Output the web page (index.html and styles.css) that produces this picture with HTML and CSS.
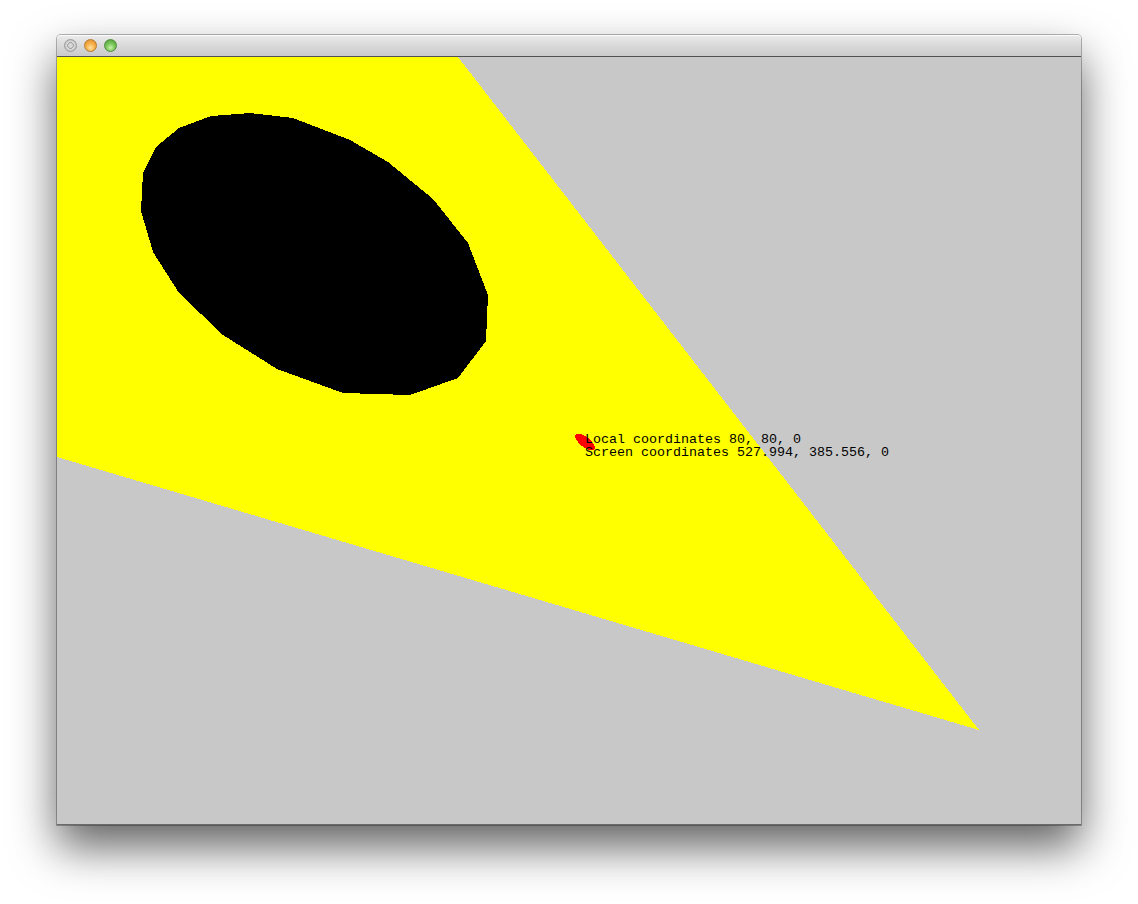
FILE: index.html
```html
<!DOCTYPE html>
<html>
<head>
<meta charset="utf-8">
<title>Coordinates</title>
<link rel="stylesheet" href="styles.css">
</head>
<body>
<div class="window">
  <div class="titlebar">
    <span class="light light-close"></span>
    <span class="light light-min"></span>
    <span class="light light-max"></span>
  </div>
  <div class="content">
    <svg class="canvas" width="1024" height="768" viewBox="0 0 1024 768">
      <polygon class="yellow" points="0,0 401,0 922,673 0,400"/>
      <polygon class="black" points="193,56 236,61 293,83 331,105 376,142 411,186 431,238 429,284 401,321 353,338 286,336 220,312 166,278 122,236 96,195 84,154 86,116 99,90 122,71 154,59"/>
      <ellipse class="red" cx="528" cy="385" rx="12" ry="5" transform="rotate(38 528 385)"/>
      <text class="label" x="528" y="386">Local coordinates 80, 80, 0</text>
      <text class="label" x="528" y="399">Screen coordinates 527.994, 385.556, 0</text>
    </svg>
  </div>
</div>
</body>
</html>
```

FILE: styles.css
```css
html, body {
  margin: 0;
  padding: 0;
  background: #ffffff;
}
body {
  padding: 35px 57px 79px 57px;
  width: 1024px;
}
.window {
  width: 1024px;
  border-radius: 4px 4px 0 0;
  box-shadow: 0 0 0 1px rgba(0,0,0,0.28), 0 22px 45px rgba(0,0,0,0.62);
  background: #c8c8c8;
}
.titlebar {
  height: 21px;
  border-bottom: 1px solid #525252;
  border-radius: 4px 4px 0 0;
  background: linear-gradient(#ececec, #d9d9d9 50%, #cbcbcb);
  box-shadow: inset 0 1px 0 rgba(255,255,255,0.8);
  display: flex;
  align-items: center;
  padding-left: 7px;
  gap: 7px;
}
.light {
  width: 13px;
  height: 13px;
  border-radius: 50%;
  box-sizing: border-box;
  display: block;
}
.light-close {
  background: radial-gradient(circle at 50% 50%, #d8d8d8 0 2px, #a8a8a8 2.5px 3.2px, #dcdcdc 3.6px, #bdbdbd 6px);
  border: 1px solid #9a9a9a;
}
.light-min {
  background: radial-gradient(circle at 50% 70%, #ffe2a0 0, #f7b04a 45%, #d98a28 100%);
  border: 1px solid #b67a2c;
}
.light-max {
  background: radial-gradient(circle at 50% 70%, #c8f0a8 0, #79c75a 45%, #4a9a35 100%);
  border: 1px solid #4f8c3c;
}
.content {
  width: 1024px;
  height: 768px;
  background: #c8c8c8;
  box-shadow: inset 0 -1px 0 #6a6a6a;
}
.canvas {
  display: block;
  shape-rendering: crispEdges;
}
.yellow { fill: #ffff00; }
.black { fill: #000000; }
.red { fill: #ff0000; }
.label {
  font-family: "Liberation Mono", "DejaVu Sans Mono", monospace;
  font-size: 13.33px;
  fill: #000000;
}
```
